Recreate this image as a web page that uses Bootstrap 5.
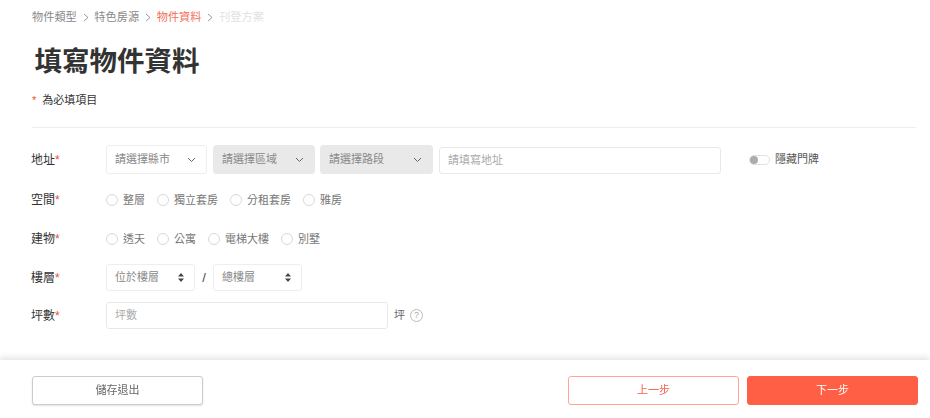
<!DOCTYPE html>
<html lang="zh-Hant"><head><meta charset="utf-8">
<link href="https://cdn.jsdelivr.net/npm/bootstrap@5.3.0/dist/css/bootstrap.min.css" rel="stylesheet">
<style>
html,body{height:418px;overflow:hidden;background:#fff}
body{font-family:"Liberation Sans","Noto Sans CJK TC",sans-serif;font-size:11px;color:#333}
.crumbs{padding:0 0 0 32px;height:34px;line-height:14px;font-size:11.2px;color:#888;gap:5.8px}
.crumbs .now{color:#f4705c}.crumbs .todo{color:#e2e2e2}.crumbs svg{width:6px;height:9px}
.ttl{font-size:27.5px;font-weight:700;color:#333;margin:8px 0 0 34.5px;line-height:40px;height:48px}
.req{color:#e8503a}
.note{padding-left:32px;height:37px;line-height:20px;color:#333;gap:6px}
.rule{margin:0 14px 0 32px;border-top:1px solid #eee;height:0}
.fbody{padding:17px 0 0 31px}
.frow{display:flex;align-items:center}
.lab{width:75px;font-size:12px;color:#333;flex:none}
.fsel{height:29px;border:1px solid #eee;border-radius:3px;color:#888;font-size:11px;padding:0 10px 0 8px;display:flex;align-items:center;justify-content:space-between;background:#fff;flex:none}
.fsel.off{background:#e9e9e9;border-color:#e9e9e9}
.tb{height:27px;border:1px solid #e8e8e8;border-radius:3px;color:#aaa;font-size:11px;padding:0 8px;display:flex;align-items:center;flex:none}
.rad{width:12px;height:12px;border:1px solid #d9d9d9;border-radius:50%;flex:none;margin-right:5px}
.opt{display:flex;align-items:center;margin-right:12px;color:#777;font-size:11px;line-height:14px}
.sw{width:21px;height:10px;border:1px solid #e2e2e2;border-radius:6px;position:relative;margin:0 5px 0 28px;flex:none}
.sw::before{content:"";position:absolute;left:0;top:0;width:8px;height:8px;border-radius:50%;background:#a9adb3}
.q{width:13px;height:13px;border:1px solid #bbb;border-radius:50%;color:#aaa;font-size:9px;line-height:11px;text-align:center;margin-left:5px}
.foot{position:fixed;left:0;right:0;bottom:0;height:58px;padding:16px 12px 0 32px;box-shadow:0 -3px 6px rgba(0,0,0,.1);background:#fff}
.fb{width:171px;height:29px;font-size:11px;padding:0;border-radius:3px;line-height:27px}
.fb.a{border:1px solid #ccc;color:#666;box-shadow:0 1px 2px rgba(0,0,0,.12);background:#fff}
.fb.b{border:1px solid #ffa59a;color:#f4604a;background:#fff}
.fb.c{background:#ff5f45;border:1px solid #ff5f45;color:#fff;margin-left:8px}
.w1{width:101px;margin-right:6px}.w2{width:102px;margin-right:5px}.w3{width:113px;margin-right:6px}.w4{width:282px}
.w5{width:89px;height:27px}
.addr{margin-top:1px}
.slash{width:18px;text-align:center;font-size:13px;color:#444}
.r1{height:29px}.r2{height:14px;margin-top:19px}.r3{height:14px;margin-top:25px}.r4{height:27px;margin-top:18px}.r5{height:27px;margin-top:11px}
.dim{color:#555}.unit{color:#666;margin-left:6px}
</style></head><body>
<nav class="crumbs d-flex align-items-center">
<span>物件類型</span><svg viewBox="0 0 6 9"><path d="M1 1l4 3.5L1 8" fill="none" stroke="#999"/></svg>
<span>特色房源</span><svg viewBox="0 0 6 9"><path d="M1 1l4 3.5L1 8" fill="none" stroke="#999"/></svg>
<span class="now">物件資料</span><svg viewBox="0 0 6 9"><path d="M1 1l4 3.5L1 8" fill="none" stroke="#999"/></svg>
<span class="todo">刊登方案</span></nav>
<h1 class="ttl">填寫物件資料</h1>
<div class="note d-flex"><span class="req">*</span><span>為必填項目</span></div>
<div class="rule"></div>
<div class="fbody">
<div class="frow r1"><div class="lab">地址<span class="req">*</span></div>
<div class="fsel w1"><span>請選擇縣市</span><svg width="9" height="6" viewBox="0 0 9 6"><path d="M1 1l3.5 3.5L8 1" fill="none" stroke="#666"/></svg></div>
<div class="fsel off w2"><span>請選擇區域</span><svg width="9" height="6" viewBox="0 0 9 6"><path d="M1 1l3.5 3.5L8 1" fill="none" stroke="#666"/></svg></div>
<div class="fsel off w3"><span>請選擇路段</span><svg width="9" height="6" viewBox="0 0 9 6"><path d="M1 1l3.5 3.5L8 1" fill="none" stroke="#666"/></svg></div>
<div class="tb w4 addr">請填寫地址</div>
<div class="sw"></div><span class="dim">隱藏門牌</span></div>
<div class="frow r2"><div class="lab">空間<span class="req">*</span></div>
<label class="opt"><span class="rad"></span>整層</label><label class="opt"><span class="rad"></span>獨立套房</label><label class="opt"><span class="rad"></span>分租套房</label><label class="opt"><span class="rad"></span>雅房</label></div>
<div class="frow r3"><div class="lab">建物<span class="req">*</span></div>
<label class="opt"><span class="rad"></span>透天</label><label class="opt"><span class="rad"></span>公寓</label><label class="opt"><span class="rad"></span>電梯大樓</label><label class="opt"><span class="rad"></span>別墅</label></div>
<div class="frow r4"><div class="lab">樓層<span class="req">*</span></div>
<div class="fsel w5"><span>位於樓層</span><svg width="6" height="9" viewBox="0 0 6 9"><path d="M3 0l3 3.5H0zM3 9L0 5.5h6z" fill="#444"/></svg></div>
<span class="slash">/</span>
<div class="fsel w5"><span>總樓層</span><svg width="6" height="9" viewBox="0 0 6 9"><path d="M3 0l3 3.5H0zM3 9L0 5.5h6z" fill="#444"/></svg></div></div>
<div class="frow r5"><div class="lab">坪數<span class="req">*</span></div>
<div class="tb w4">坪數</div><span class="unit">坪</span><span class="q">?</span></div>
</div>
<footer class="foot d-flex">
<button class="btn fb a">儲存退出</button>
<button class="btn fb b ms-auto">上一步</button>
<button class="btn fb c">下一步</button>
</footer>
<script src="https://cdn.jsdelivr.net/npm/bootstrap@5.3.0/dist/js/bootstrap.bundle.min.js"></script>
</body></html>
